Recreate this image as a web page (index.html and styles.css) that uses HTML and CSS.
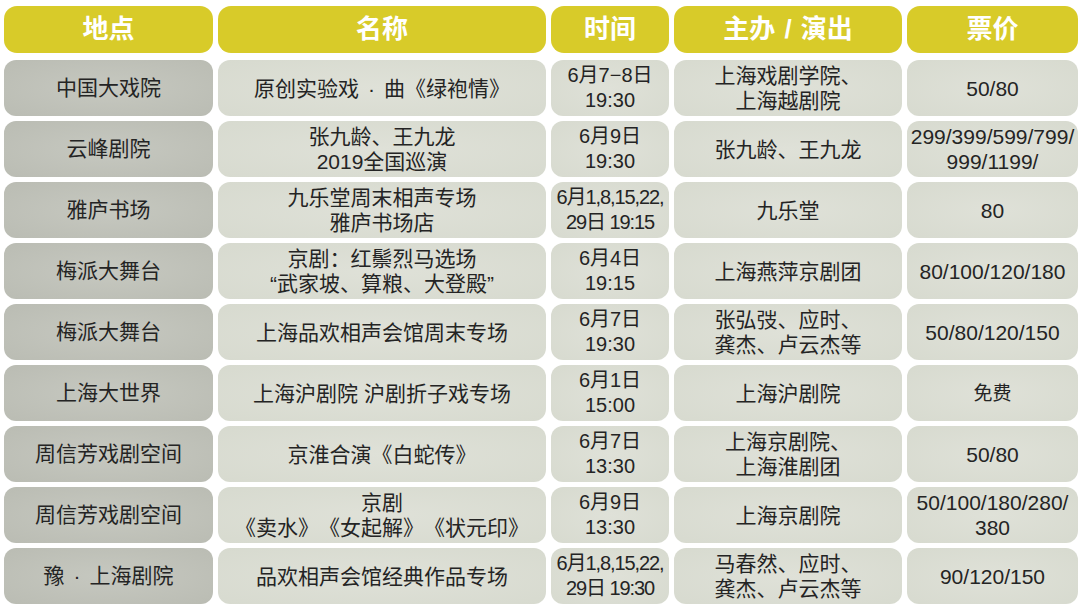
FILE: index.html
```html
<!DOCTYPE html>
<html lang="zh-CN">
<head>
<meta charset="utf-8">
<title>演出信息</title>
<link rel="stylesheet" href="styles.css">
</head>
<body>
<div class="table">
  <div class="row head">
    <div class="cell">地点</div>
    <div class="cell">名称</div>
    <div class="cell">时间</div>
    <div class="cell">主办 / 演出</div>
    <div class="cell">票价</div>
  </div>
  <div class="row">
    <div class="cell place">中国大戏院</div>
    <div class="cell"><span class="t">原创实验戏<span class="dot">·</span>曲《绿袍情》</span></div>
    <div class="cell time">6月7−8日<br>19:30</div>
    <div class="cell">上海戏剧学院、<br>上海越剧院</div>
    <div class="cell">50/80</div>
  </div>
  <div class="row">
    <div class="cell place">云峰剧院</div>
    <div class="cell">张九龄、王九龙<br>2019全国巡演</div>
    <div class="cell time">6月9日<br>19:30</div>
    <div class="cell">张九龄、王九龙</div>
    <div class="cell">299/399/599/799/<br>999/1199/</div>
  </div>
  <div class="row">
    <div class="cell place">雅庐书场</div>
    <div class="cell">九乐堂周末相声专场<br>雅庐书场店</div>
    <div class="cell time tight">6月1,8,15,22,<br>29日 19:15</div>
    <div class="cell">九乐堂</div>
    <div class="cell">80</div>
  </div>
  <div class="row">
    <div class="cell place">梅派大舞台</div>
    <div class="cell">京剧：红鬃烈马选场<br>“武家坡、算粮、大登殿”</div>
    <div class="cell time">6月4日<br>19:15</div>
    <div class="cell">上海燕萍京剧团</div>
    <div class="cell">80/100/120/180</div>
  </div>
  <div class="row">
    <div class="cell place">梅派大舞台</div>
    <div class="cell">上海品欢相声会馆周末专场</div>
    <div class="cell time">6月7日<br>19:30</div>
    <div class="cell">张弘弢、应时、<br>龚杰、卢云杰等</div>
    <div class="cell">50/80/120/150</div>
  </div>
  <div class="row">
    <div class="cell place">上海大世界</div>
    <div class="cell">上海沪剧院 沪剧折子戏专场</div>
    <div class="cell time">6月1日<br>15:00</div>
    <div class="cell">上海沪剧院</div>
    <div class="cell small">免费</div>
  </div>
  <div class="row">
    <div class="cell place">周信芳戏剧空间</div>
    <div class="cell">京淮合演《白蛇传》</div>
    <div class="cell time">6月7日<br>13:30</div>
    <div class="cell">上海京剧院、<br>上海淮剧团</div>
    <div class="cell">50/80</div>
  </div>
  <div class="row">
    <div class="cell place">周信芳戏剧空间</div>
    <div class="cell">京剧<br>《卖水》《女起解》《状元印》</div>
    <div class="cell time">6月9日<br>13:30</div>
    <div class="cell">上海京剧院</div>
    <div class="cell">50/100/180/280/<br>380</div>
  </div>
  <div class="row">
    <div class="cell place">豫<span class="dot">·</span>上海剧院</div>
    <div class="cell">品欢相声会馆经典作品专场</div>
    <div class="cell time tight">6月1,8,15,22,<br>29日 19:30</div>
    <div class="cell">马春然、应时、<br>龚杰、卢云杰等</div>
    <div class="cell">90/120/150</div>
  </div>
</div>
</body>
</html>
```
FILE: styles.css
```css
html, body {
  margin: 0;
  padding: 0;
  background: #ffffff;
}
body {
  width: 1080px;
  height: 608px;
  overflow: hidden;
  font-family: "Liberation Sans", "Noto Sans CJK SC", sans-serif;
  color: #242424;
  text-spacing-trim: space-all;
}
.table {
  display: flex;
  flex-direction: column;
  gap: 5px;
  padding: 6px 2px 0 4px;
}
.row {
  display: grid;
  grid-template-columns: 209px 328px 118px 228px 171px;
  column-gap: 5px;
  height: 56px;
}
.cell {
  border-radius: 12px;
  display: flex;
  align-items: center;
  justify-content: center;
  text-align: center;
  font-size: 21px;
  line-height: 25px;
  white-space: nowrap;
  text-spacing-trim: space-all;
  background: radial-gradient(ellipse at center, #dfe1d8 0%, #d7dacf 100%);
}
.cell.place {
  background: radial-gradient(ellipse at center, #c6c8c0 0%, #babcb3 100%);
  display: block;
  line-height: 56px;
}
.dot {
  display: inline-block;
  margin: 0 9px;
}
.cell.time {
  font-size: 20px;
}
.cell.tight {
  letter-spacing: -1.1px;
}
.cell.small {
  font-size: 19px;
}
.row.head {
  height: 47px;
  margin-bottom: 2px;
}
.row.head .cell {
  background: #d8cb29;
  color: #ffffff;
  font-weight: bold;
  font-size: 26px;
  border-radius: 13px;
  word-spacing: 2px;
}
```
